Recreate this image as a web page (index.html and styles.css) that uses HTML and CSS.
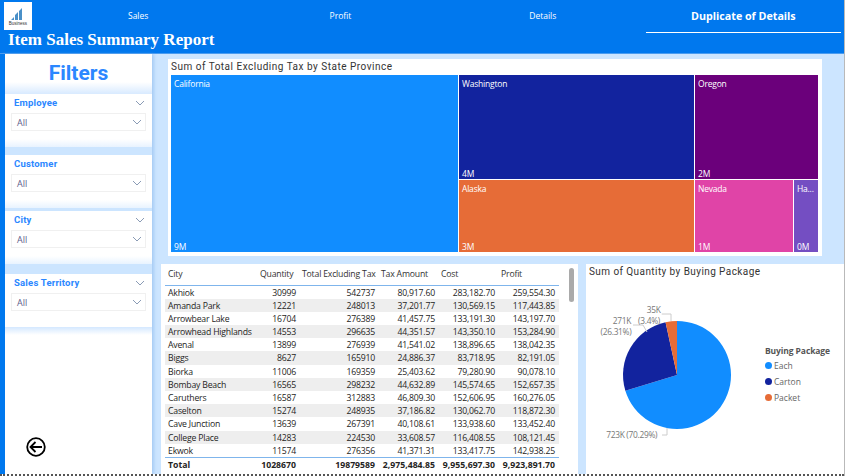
FILE: index.html
```html
<!DOCTYPE html>
<html lang="en">
<head>
<meta charset="utf-8">
<title>Item Sales Summary Report</title>
<link rel="stylesheet" href="styles.css">
</head>
<body>
<div class="app">
  <header class="header">
    <div class="top-row">
      <div class="logo">
        <svg width="16" height="14" viewBox="0 0 16 14"><path d="M1 13 L4 10 L4 13Z M5 13 L5 8 L8 5 L8 13Z M9 13 L9 4 L12 1 L12 13Z" fill="#4a90c8"/></svg>
        <span class="logo-text">Business</span>
      </div>
      <nav class="tabs">
        <div class="tab">Sales</div>
        <div class="tab">Profit</div>
        <div class="tab">Details</div>
        <div class="tab tab-active">Duplicate of Details</div>
      </nav>
    </div>
    <h1 class="report-title">Item Sales Summary Report</h1>
  </header>
  <div class="main">
    <aside class="sidebar">
      <div class="filters-head">Filters</div>
      <div class="slicer">
        <div class="slicer-head"><span>Employee</span><svg class="chev" viewBox="0 0 10 6"><path d="M1 1 L5 5 L9 1"/></svg></div>
        <div class="dropdown"><span>All</span><svg class="chev" viewBox="0 0 10 6"><path d="M1 1 L5 5 L9 1"/></svg></div>
      </div>
      <div class="slicer slicer-customer">
        <div class="slicer-head"><span>Customer</span></div>
        <div class="dropdown"><span>All</span><svg class="chev" viewBox="0 0 10 6"><path d="M1 1 L5 5 L9 1"/></svg></div>
      </div>
      <div class="slicer slicer-city">
        <div class="slicer-head"><span>City</span><svg class="chev" viewBox="0 0 10 6"><path d="M1 1 L5 5 L9 1"/></svg></div>
        <div class="dropdown"><span>All</span><svg class="chev" viewBox="0 0 10 6"><path d="M1 1 L5 5 L9 1"/></svg></div>
      </div>
      <div class="slicer slicer-territory">
        <div class="slicer-head"><span>Sales Territory</span><svg class="chev" viewBox="0 0 10 6"><path d="M1 1 L5 5 L9 1"/></svg></div>
        <div class="dropdown"><span>All</span><svg class="chev" viewBox="0 0 10 6"><path d="M1 1 L5 5 L9 1"/></svg></div>
      </div>
      <div class="back">
        <svg width="20" height="20" viewBox="0 0 20 20"><circle cx="10" cy="10" r="8.8" fill="none" stroke="#000" stroke-width="1.8"/><path d="M16 10 H4.5 M9.5 5 L4.5 10 L9.5 15" fill="none" stroke="#000" stroke-width="1.8"/></svg>
      </div>
    </aside>
    <div class="content">
      <section class="treemap-panel">
        <div class="visual-title">Sum of Total Excluding Tax by State Province</div>
        <div class="treemap">
          <div class="cell california"><span>California</span><span>9M</span></div>
          <div class="tm-col tm-mid">
            <div class="cell washington"><span>Washington</span><span>4M</span></div>
            <div class="cell alaska"><span>Alaska</span><span>3M</span></div>
          </div>
          <div class="tm-col tm-right">
            <div class="cell oregon"><span>Oregon</span><span>2M</span></div>
            <div class="tm-row">
              <div class="cell nevada"><span>Nevada</span><span>1M</span></div>
              <div class="cell hawaii"><span>Ha...</span><span>0M</span></div>
            </div>
          </div>
        </div>
      </section>
      <div class="bottom-row">
        <section class="table-panel">
          <table class="data">
            <colgroup><col class="c-city"><col class="c-qty"><col class="c-tax"><col class="c-amt"><col class="c-cost"><col class="c-profit"></colgroup>
            <thead><tr><th>City</th><th>Quantity</th><th>Total Excluding Tax</th><th>Tax Amount</th><th>Cost</th><th>Profit</th></tr></thead>
            <tbody>
              <tr><td>Akhiok</td><td>30999</td><td>542737</td><td>80,917.60</td><td>283,182.70</td><td>259,554.30</td></tr>
              <tr><td>Amanda Park</td><td>12221</td><td>248013</td><td>37,201.77</td><td>130,569.15</td><td>117,443.85</td></tr>
              <tr><td>Arrowbear Lake</td><td>16704</td><td>276389</td><td>41,457.75</td><td>133,191.30</td><td>143,197.70</td></tr>
              <tr><td>Arrowhead Highlands</td><td>14553</td><td>296635</td><td>44,351.57</td><td>143,350.10</td><td>153,284.90</td></tr>
              <tr><td>Avenal</td><td>13899</td><td>276939</td><td>41,541.02</td><td>138,896.65</td><td>138,042.35</td></tr>
              <tr class="row-tall"><td>Biggs</td><td>8627</td><td>165910</td><td>24,886.37</td><td>83,718.95</td><td>82,191.05</td></tr>
              <tr><td>Biorka</td><td>11006</td><td>169359</td><td>25,403.62</td><td>79,280.90</td><td>90,078.10</td></tr>
              <tr><td>Bombay Beach</td><td>16565</td><td>298232</td><td>44,632.89</td><td>145,574.65</td><td>152,657.35</td></tr>
              <tr><td>Caruthers</td><td>16587</td><td>312883</td><td>46,809.30</td><td>152,606.95</td><td>160,276.05</td></tr>
              <tr><td>Caselton</td><td>15274</td><td>248935</td><td>37,186.82</td><td>130,062.70</td><td>118,872.30</td></tr>
              <tr class="row-tall"><td>Cave Junction</td><td>13639</td><td>267391</td><td>40,108.61</td><td>133,938.60</td><td>133,452.40</td></tr>
              <tr><td>College Place</td><td>14283</td><td>224530</td><td>33,608.57</td><td>116,408.55</td><td>108,121.45</td></tr>
              <tr><td>Ekwok</td><td>11574</td><td>276356</td><td>41,371.31</td><td>133,417.75</td><td>142,938.25</td></tr>
            </tbody>
            <tfoot><tr><td>Total</td><td>1028670</td><td>19879589</td><td>2,975,484.85</td><td>9,955,697.30</td><td>9,923,891.70</td></tr></tfoot>
          </table>
          <div class="scrollbar"></div>
        </section>
        <section class="pie-panel">
          <div class="visual-title">Sum of Quantity by Buying Package</div>
          <div class="pie-body">
            <svg class="pie" width="170" height="146" viewBox="0 -6 170 146">
              <path d="M88 14 A54 54 0 1 1 36.35 83.75 L88 68 Z" fill="#118DFF"/>
              <path d="M36.35 83.75 A54 54 0 0 1 76.55 15.23 L88 68 Z" fill="#12239E"/>
              <path d="M76.55 15.23 A54 54 0 0 1 88 14 L88 68 Z" fill="#E66C37"/>
              <path d="M72.7 7 H82 V14 M44 18 H54 L58 25 M73 128 H78 V121" fill="none" stroke="#ccc" stroke-width="1"/>
              <text class="pie-label" x="64.7" y="6" text-anchor="middle">35K</text>
              <text class="pie-label" x="60" y="17" text-anchor="middle">(3.4%)</text>
              <text class="pie-label" x="33" y="17" text-anchor="middle">271K</text>
              <text class="pie-label" x="27" y="28" text-anchor="middle">(26.31%)</text>
              <text class="pie-label" x="42.7" y="131" text-anchor="middle">723K (70.29%)</text>
            </svg>
            <div class="legend">
              <div class="legend-title">Buying Package</div>
              <div class="legend-item"><i class="dot dot-each"></i>Each</div>
              <div class="legend-item"><i class="dot dot-carton"></i>Carton</div>
              <div class="legend-item"><i class="dot dot-packet"></i>Packet</div>
            </div>
          </div>
        </section>
      </div>
    </div>
  </div>
  <div class="dotted"></div>
</div>
</body>
</html>
```

FILE: styles.css
```css
* { box-sizing: border-box; }
html, body { margin: 0; padding: 0; background: #fff; overflow: hidden; }
.app {
  width: 845px; height: 476px; display: flex; flex-direction: column;
  border-right: 1px solid #b9b9b9;
  font-family: "Open Sans", "Liberation Sans", sans-serif;
}
.header { height: 54px; flex: none; background: #0078ee; border-bottom: 1px solid #4a9cf0; }
.top-row { display: flex; height: 33px; }
.logo {
  width: 28px; height: 28px; margin: 2px 0 0 4px; background: #fff; flex: none;
  display: flex; flex-direction: column; align-items: center; justify-content: center;
}
.logo-text { font-size: 4.5px; line-height: 5px; color: #333; font-family: "Liberation Sans", sans-serif; }
.tabs { display: flex; flex: 1; margin-left: 5px; }
.tab {
  width: 202.3px; height: 33px; padding-top: 10px; text-align: center;
  color: #fff; font-size: 8.5px; line-height: 12px;
}
.tab-active {
  width: 195px; margin-left: 2px; padding-top: 9px;
  font-size: 10.7px; font-weight: 700; line-height: 15px; border-bottom: 1px solid #fff;
}
.report-title {
  margin: -1px 0 0 8px; color: #fff; font: 700 17px/16px "Liberation Serif", serif;
}
.main { flex: 1; display: flex; min-height: 0; background: #cce5ff; }
.sidebar {
  width: 152px; flex: none; display: flex; flex-direction: column;
  background: #cce5ff; border-left: 5px solid #0078ee;
  box-shadow: 2px 0 3px rgba(120, 170, 230, .45);
}
.filters-head {
  height: 40px; text-align: center; color: #2b87ff;
  font: 700 21px/38px Roboto, sans-serif;
  background: linear-gradient(#fff 70%, #d8eaff);
}
.slicer { height: 53px; padding: 2px 6px 0; background: linear-gradient(#fff 85%, #e8f3ff); flex: none; }
.slicer-customer { margin-top: 8px; }
.slicer-city { margin-top: 3px; }
.slicer-territory { margin-top: 10px; background: #fff; }
.slicer-head {
  display: flex; justify-content: space-between; align-items: center; height: 14px;
  padding: 0 1px 0 3px;
  color: #2b87ff; font: 700 9.5px/14px Roboto, sans-serif; letter-spacing: .2px;
}
.dropdown {
  display: flex; justify-content: space-between; align-items: center;
  height: 18px; margin-top: 3px; padding: 0 3px 0 5px;
  border: 1px solid #f0f0f0; color: #605e8a; font-size: 9px;
}
.chev { width: 10px; height: 6px; fill: none; stroke: #8a9bb5; stroke-width: 1; }
.back {
  flex: 1; display: flex; align-items: flex-end; padding: 0 0 17px 21px;
  background: linear-gradient(#d4e8ff, #fff 8px);
}
.content { flex: 1; min-width: 0; display: flex; flex-direction: column; }
.treemap-panel {
  width: 654px; height: 197px; margin: 5px 0 0 16px; padding: 2px 3px 0; background: #fff;
}
.visual-title {
  font: 400 10px/12px Roboto, sans-serif; letter-spacing: .5px; color: #333;
}
.treemap { display: flex; height: 177px; margin-top: 2px; gap: 1px; background: #fff; }
.cell {
  display: flex; flex-direction: column; justify-content: space-between;
  padding: 2.5px 3px 0; color: #fff; font-size: 8.5px; line-height: 11px; letter-spacing: -.2px;
  overflow: hidden; white-space: nowrap;
}
.tm-col { display: flex; flex-direction: column; gap: 1px; }
.tm-row { display: flex; gap: 1px; flex: 1; }
.california { width: 287px; background: #118dff; }
.tm-mid { width: 235px; }
.tm-right { width: 123px; }
.washington { height: 104px; background: #12239e; }
.alaska { flex: 1; background: #e66c37; }
.oregon { height: 104px; background: #6b007b; }
.nevada { width: 98px; background: #e044a7; }
.hawaii { flex: 1; background: #744ec2; }
.bottom-row { display: flex; margin: 8px 0 0 9px; gap: 8px; height: 210px; }
.table-panel { width: 417px; padding: 2px 0 0 4px; background: #fff; position: relative; }
.pie-panel { flex: 1; background: #fff; padding: 1px 0 0 3px; }
.pie-panel .visual-title { letter-spacing: .42px; margin-top: 1px; }
.data {
  border-collapse: collapse; table-layout: fixed; width: 394px;
  font-size: 8.7px; letter-spacing: -.2px; color: #252423;
}
.c-city { width: 92px; } .c-qty { width: 42px; } .c-tax { width: 79px; }
.c-amt { width: 60px; } .c-cost { width: 60px; } .c-profit { width: 61px; }
.data th {
  height: 19px; padding: 0 0 2px 3px; font-weight: 400; text-align: left; color: #333;
  border-bottom: 1px solid #7fb5ec; white-space: nowrap;
}
.data td { height: 13px; line-height: 12px; padding: 1px 3px 0; text-align: right; white-space: nowrap; }
.data td:first-child { text-align: left; }
.data td:last-child { padding-right: 4px; }
.data .row-tall td { height: 14px; }
.data tbody tr:nth-child(even) td { background: #eeeeee; }
.data tfoot td { height: 15px; font-weight: 700; letter-spacing: 0; border-top: 1px solid #7fb5ec; }
.scrollbar {
  position: absolute; left: 408px; top: 4px; width: 5px; height: 34px;
  border-radius: 3px; background: #aaa;
}
.pie-body { display: flex; align-items: flex-start; }
.pie { flex: none; margin-top: 23px; }
.pie-label { font: 400 8.4px "Open Sans", sans-serif; letter-spacing: -.3px; fill: #777; }
.legend { margin: 66px 0 0 6px; }
.legend-title { font-size: 8.5px; font-weight: 700; line-height: 13px; color: #555; letter-spacing: -.1px; }
.legend-item { display: flex; align-items: center; gap: 2px; height: 16px; font-size: 8.5px; color: #666; }
.dot { width: 7px; height: 7px; border-radius: 50%; flex: none; }
.dot-each { background: #118dff; } .dot-carton { background: #12239e; } .dot-packet { background: #e66c37; }
.dotted { height: 2px; flex: none; border-top: 2px dotted #555; background: #fff; }
```
